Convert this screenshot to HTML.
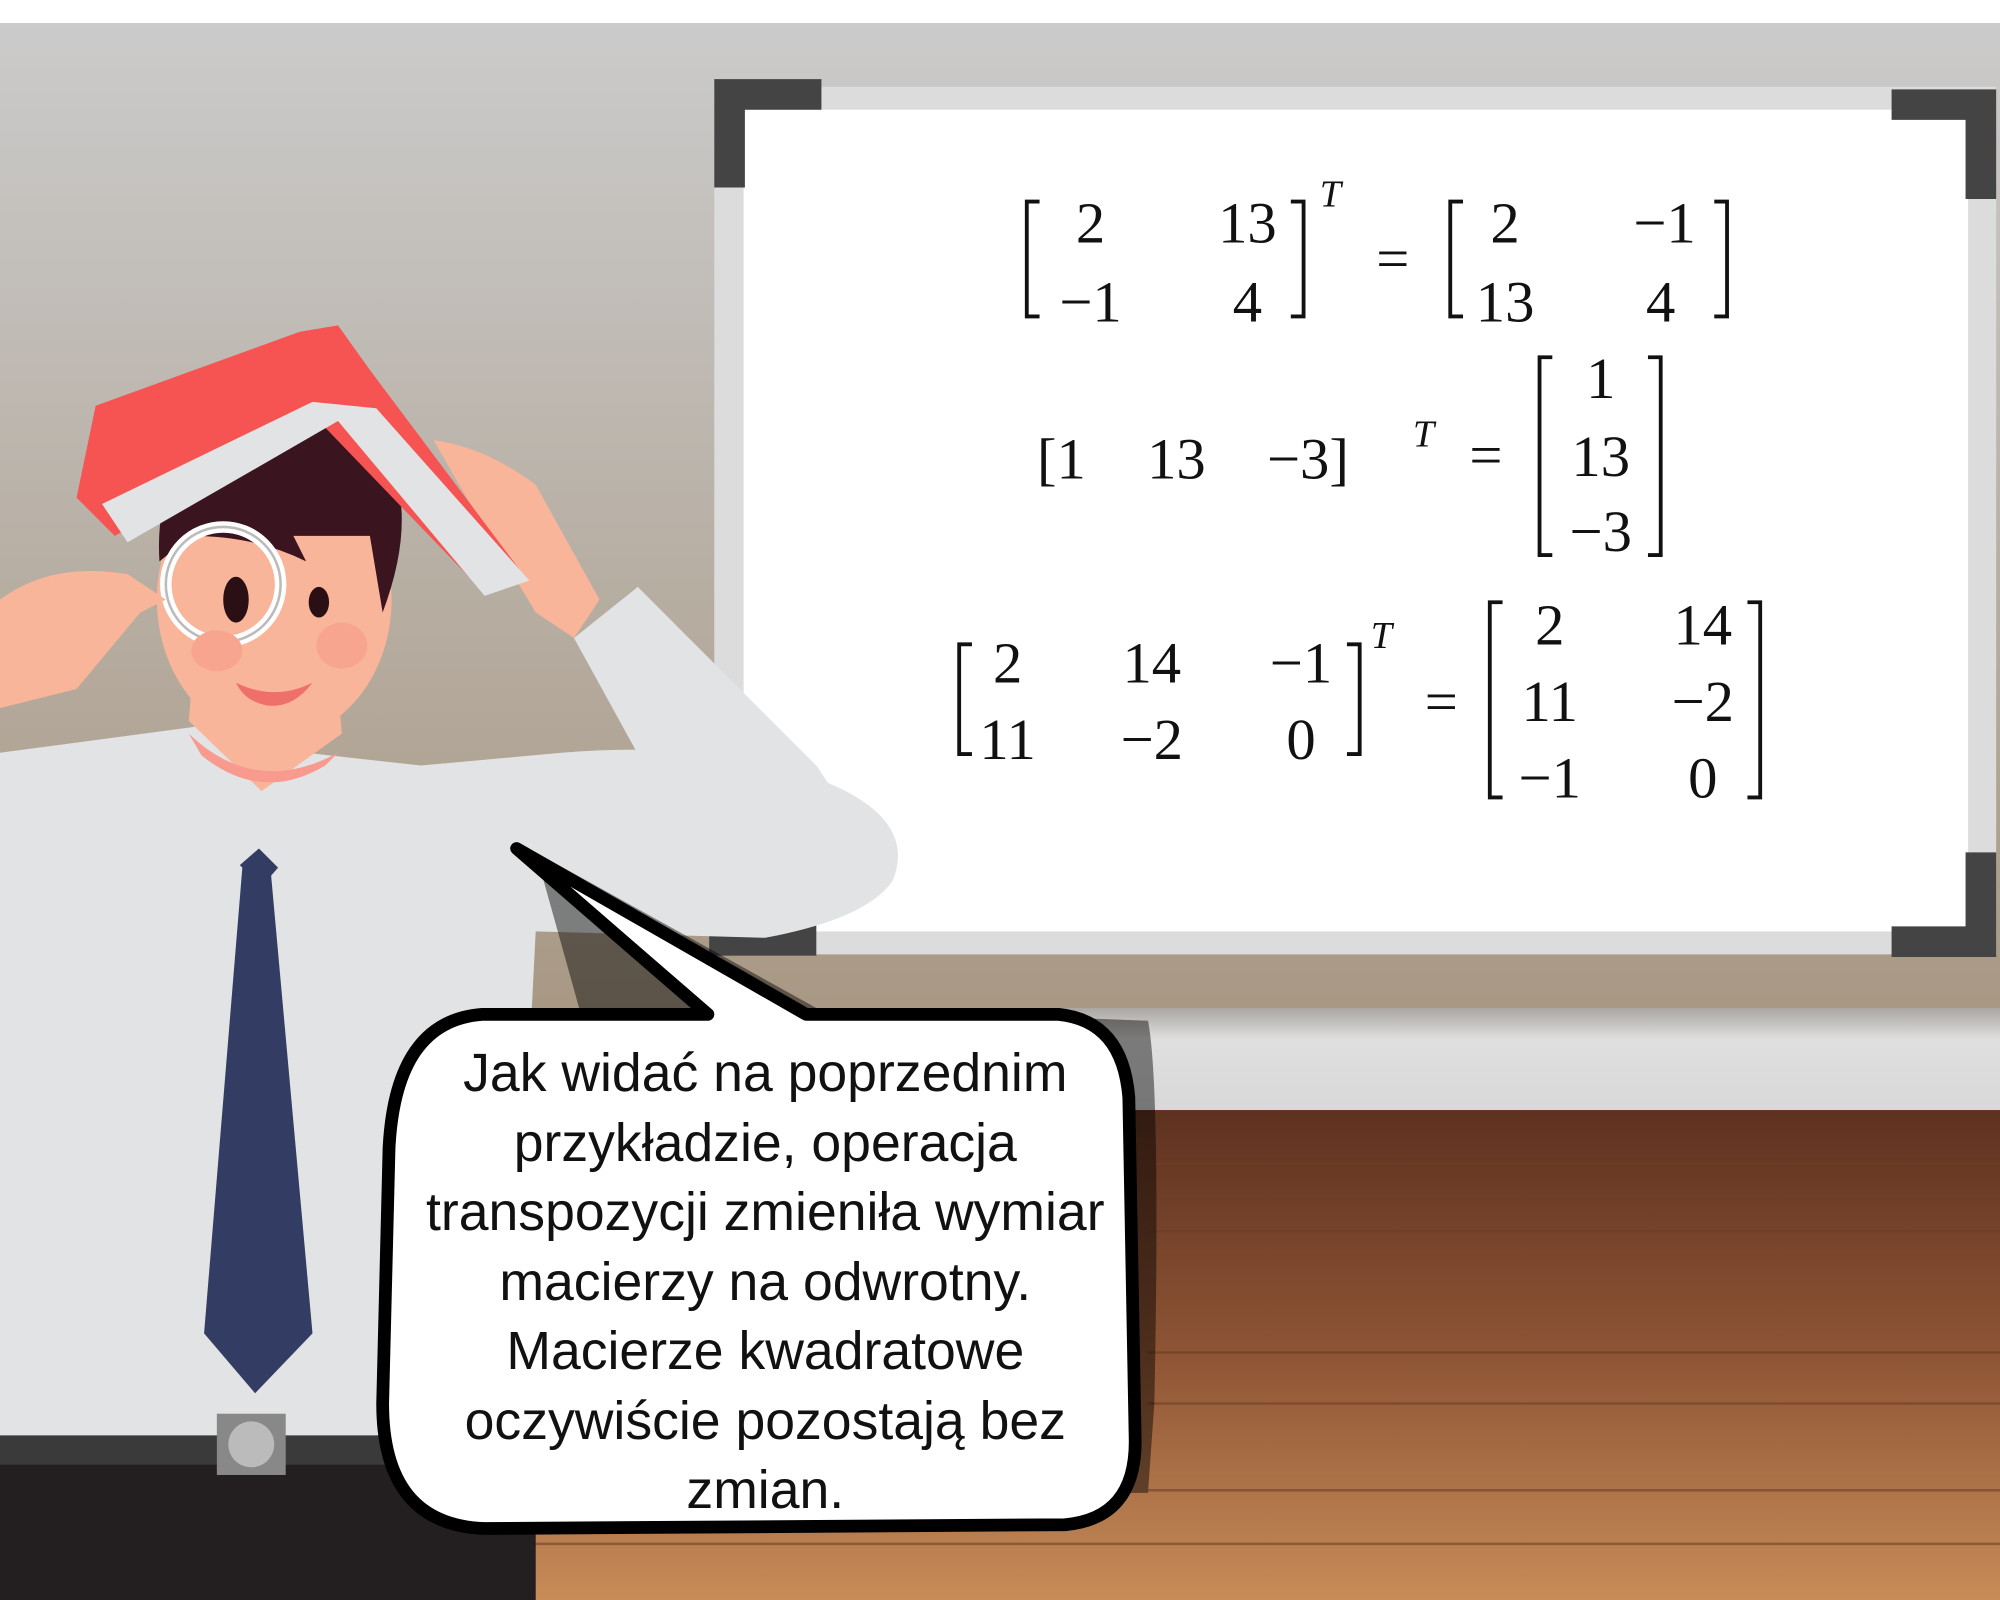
<!DOCTYPE html>
<html><head><meta charset="utf-8"><style>html,body{margin:0;padding:0;background:#fff}svg{display:block}</style></head>
<body>
<svg width="2000" height="1600" viewBox="0 0 1568 1254" preserveAspectRatio="none" xmlns="http://www.w3.org/2000/svg">
<defs>
<linearGradient id="wall" x1="0" y1="0" x2="0" y2="1"><stop offset="0" stop-color="#cbcbcb"/><stop offset="1" stop-color="#a89884"/></linearGradient>
<linearGradient id="band" x1="0" y1="0" x2="0" y2="1"><stop offset="0" stop-color="#a9a6a3"/><stop offset="0.3" stop-color="#e0dfdf"/><stop offset="1" stop-color="#d9d8d8"/></linearGradient>
<linearGradient id="floor" x1="0" y1="0" x2="0" y2="1"><stop offset="0" stop-color="#5e3120"/><stop offset="0.5" stop-color="#8e5535"/><stop offset="1" stop-color="#c88c58"/></linearGradient>
</defs>
<rect width="1568" height="1254" fill="#fff"/>
<rect y="18" width="1568" height="775" fill="url(#wall)"/>
<rect y="790" width="1568" height="82" fill="url(#band)"/>
<rect y="870" width="1568" height="384" fill="url(#floor)"/>
<g stroke="#6e3e26" stroke-width="2" opacity="0.6">
<line x1="900" y1="912" x2="1568" y2="912"/><line x1="900" y1="965" x2="1568" y2="965"/><line x1="900" y1="1060" x2="1568" y2="1060"/><line x1="900" y1="1100" x2="1568" y2="1100"/><line x1="900" y1="1168" x2="1568" y2="1168"/><line x1="400" y1="1210" x2="1568" y2="1210"/>
</g>
<!-- whiteboard -->
<rect x="560" y="68" width="1005" height="680" fill="#dcdcdc"/>
<rect x="583" y="86" width="960" height="644" fill="#fff"/>
<path d="M560 147V62h84v24h-60v61z" fill="#444"/>
<path d="M1483 70h82v86h-24V94h-58z" fill="#444"/>
<path d="M1565 668v82h-82v-24h58v-58z" fill="#444"/>
<rect x="556" y="723" width="84" height="26" fill="#444"/>
<g font-family="Liberation Serif, serif" font-size="46" fill="#111" text-anchor="middle">
<path d="M815 158h-10v90h10M1012 158h10v90h-10" stroke="#111" stroke-width="3" fill="none"/>
<text x="855" y="190">2</text><text x="978" y="190">13</text><text x="855" y="252">−1</text><text x="978" y="252">4</text>
<text x="1043" y="162" font-size="30" font-style="italic">T</text>
<text x="1092" y="218">=</text>
<path d="M1147 158h-10v90h10M1344 158h10v90h-10" stroke="#111" stroke-width="3" fill="none"/>
<text x="1180" y="190">2</text><text x="1305" y="190">−1</text><text x="1180" y="252">13</text><text x="1302" y="252">4</text>
<text x="813" y="375" text-anchor="start">[1<tspan dx="48">13</tspan><tspan dx="48">−3]</tspan></text>
<text x="1116" y="350" font-size="30" font-style="italic">T</text>
<text x="1165" y="372">=</text>
<path d="M1217 280h-10v155h10M1292 280h10v155h-10" stroke="#111" stroke-width="3" fill="none"/>
<text x="1255" y="312">1</text><text x="1255" y="373">13</text><text x="1255" y="432">−3</text>
<path d="M762 505h-10v86h10M1056 505h10v86h-10" stroke="#111" stroke-width="3" fill="none"/>
<text x="790" y="535">2</text><text x="903" y="535">14</text><text x="1020" y="535">−1</text>
<text x="790" y="595">11</text><text x="903" y="595">−2</text><text x="1020" y="595">0</text>
<text x="1083" y="508" font-size="30" font-style="italic">T</text>
<text x="1130" y="565">=</text>
<path d="M1178 472h-10v153h10M1370 472h10v153h-10" stroke="#111" stroke-width="3" fill="none"/>
<text x="1215" y="505">2</text><text x="1335" y="505">14</text><text x="1215" y="565">11</text><text x="1335" y="565">−2</text><text x="1215" y="625">−1</text><text x="1335" y="625">0</text>
</g>
<!-- person -->
<path d="M0 1254V1130h420v124z" fill="#231f20"/>
<rect x="0" y="1118" width="430" height="30" fill="#3a3a3a"/>
<path d="M0 590 L150 570 Q200 560 240 590 L330 600 L440 590 Q560 580 640 610 Q720 640 700 690 Q680 720 600 735 L420 730 L400 1125 L0 1125z" fill="#e2e3e4"/>
<path d="M450 500 L500 460 L640 600 L700 690 L560 700z" fill="#e2e3e4"/>
<path d="M148 565 L205 620 L268 575 L265 540 L150 540z" fill="#f9b59a"/>
<path d="M148 575 Q200 625 265 590 L255 600 Q205 630 158 592z" fill="#f89a8e"/>
<path d="M190 680 L212 680 L245 1045 L200 1092 L160 1045z" fill="#333d63"/>
<path d="M188 678 L203 665 L218 680 L205 695z" fill="#333d63"/>
<rect x="170" y="1108" width="54" height="48" fill="#888"/><circle cx="197" cy="1132" r="18" fill="#bbb"/>
<ellipse cx="215" cy="470" rx="92" ry="110" fill="#f9b59a"/>
<path d="M125 440 Q120 360 180 330 Q250 310 300 350 Q330 400 300 480 L290 420 L230 420 L240 440 Q200 420 150 420z" fill="#3a141e"/>
<circle cx="175" cy="458" r="45" fill="none" stroke="#fff" stroke-width="9"/>
<circle cx="175" cy="458" r="45" fill="none" stroke="#bbb" stroke-width="2"/>
<ellipse cx="185" cy="470" rx="10" ry="18" fill="#2a1014"/><ellipse cx="250" cy="472" rx="8" ry="12" fill="#2a1014"/>
<ellipse cx="268" cy="506" rx="20" ry="18" fill="#f8a58f"/><ellipse cx="170" cy="510" rx="20" ry="16" fill="#f8a58f"/>
<path d="M185 535 Q215 550 245 535 Q230 555 210 553 Q192 550 185 535z" fill="#ef6f6a"/>
<path d="M0 470 Q40 440 100 450 L130 470 L110 480 L60 540 L0 555z" fill="#f9b59a"/>
<path d="M340 345 Q380 350 420 380 L470 470 L450 500 L420 480 L360 380z" fill="#f9b59a"/>
<path d="M60 390 L75 318 L235 260 L265 255 L290 290 L410 450 L380 465 L250 330 L90 420z" fill="#f55452"/>
<path d="M80 395 L245 315 L295 320 L415 455 L380 467 L265 330 L100 425z" fill="#e2e3e4"/>
<!-- bubble -->
<path d="M420 668 L640 790 L900 800 Q910 850 905 1100 L900 1170 L560 1170z" fill="#000" opacity="0.45"/>
<path d="M378 795 Q310 800 305 900 L300 1100 Q300 1195 380 1198 L835 1195 Q890 1190 890 1130 L885 860 Q880 800 830 795 L632 795 L405 665 L555 795z" fill="#fff" stroke="#000" stroke-width="10" stroke-linejoin="round"/>
<g font-family="Liberation Sans, sans-serif" font-size="42" fill="#111" text-anchor="middle">
<text x="600" y="855">Jak widać na poprzednim</text>
<text x="600" y="910">przykładzie, operacja</text>
<text x="600" y="964">transpozycji zmieniła wymiar</text>
<text x="600" y="1019">macierzy na odwrotny.</text>
<text x="600" y="1073">Macierze kwadratowe</text>
<text x="600" y="1128">oczywiście pozostają bez</text>
<text x="600" y="1182">zmian.</text>
</g>
</svg>
</body></html>
